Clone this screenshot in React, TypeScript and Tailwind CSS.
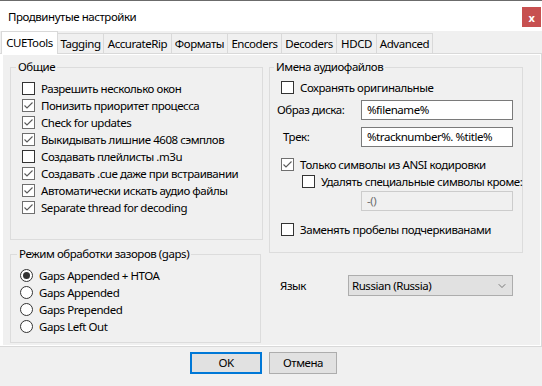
import { ChevronDown } from "lucide-react";

const tabs = [
  { label: "CUETools", w: "w-[57px]" },
  { label: "Tagging", w: "w-[46px]" },
  { label: "AccurateRip", w: "w-[68px]" },
  { label: "Форматы", w: "w-[56px]" },
  { label: "Encoders", w: "w-[54px]" },
  { label: "Decoders", w: "w-[55px]" },
  { label: "HDCD", w: "w-[40px]" },
  { label: "Advanced", w: "w-[56px]" },
];

const general = [
  { label: "Разрешить несколько окон", checked: false },
  { label: "Понизить приоритет процесса", checked: true },
  { label: "Check for updates", checked: true },
  { label: "Выкидывать лишние 4608 сэмплов", checked: true },
  { label: "Создавать плейлисты .m3u", checked: false },
  { label: "Создавать .cue даже при встраивании", checked: true },
  { label: "Автоматически искать аудио файлы", checked: true },
  { label: "Separate thread for decoding", checked: true },
];

const gaps = ["Gaps Appended + HTOA", "Gaps Appended", "Gaps Prepended", "Gaps Left Out"];

function Check({ checked }: { checked: boolean }) {
  return (
    <span
      className={`w-[13px] h-[13px] shrink-0 bg-white border flex items-center justify-center ${
        checked ? "border-[#6f6f6f]" : "border-[#333333]"
      }`}
    >
      {checked && (
        <svg width="11" height="11" viewBox="0 0 11 11">
          <path d="M1.5 5.5 L4 8 L9.5 2.5" fill="none" stroke="#5a5a5a" strokeWidth="1.1" />
        </svg>
      )}
    </span>
  );
}

function CheckRow({ label, checked, className = "" }: { label: string; checked: boolean; className?: string }) {
  return (
    <div className={`flex items-center gap-[6px] h-[17px] ${className}`}>
      <Check checked={checked} />
      <span className="whitespace-nowrap">{label}</span>
    </div>
  );
}

function Radio({ label, selected }: { label: string; selected: boolean }) {
  return (
    <div className="flex items-center gap-[6px] h-[17px]">
      <span className="w-[13px] h-[13px] rounded-full bg-white border border-[#333333] flex items-center justify-center">
        {selected && <span className="w-[7px] h-[7px] rounded-full bg-[#333333]" />}
      </span>
      <span className="whitespace-nowrap">{label}</span>
    </div>
  );
}

export default function App() {
  return (
    <div
      className="w-[542px] h-[386px] bg-[#f0f0f0] text-[11.5px] tracking-[-0.45px] leading-[16px] text-black flex flex-col overflow-hidden"
      style={{ fontFamily: '"Segoe UI", "Noto Sans", sans-serif' }}
    >
      {/* Title bar */}
      <div className="h-[31px] bg-white border-t border-[#6b6b6b] flex justify-between shrink-0">
        <span className="pl-[8px] pt-[8px]">Продвинутые настройки</span>
        <div className="mt-[6px] mr-[1px] w-[19px] h-[20px] bg-[#c75050] flex items-center justify-center text-white text-[11px] font-bold leading-none">
          x
        </div>
      </div>

      {/* Tabs */}
      <div className="h-[22px] flex items-end pl-[1px] shrink-0">
        {tabs.map((t, i) =>
          i === 0 ? (
            <div
              key={t.label}
              className={`${t.w} h-[23px] bg-white border border-b-0 border-[#d9d9d9] relative z-10 -mb-px flex items-center justify-center`}
            >
              {t.label}
            </div>
          ) : (
            <div
              key={t.label}
              className={`${t.w} h-[20px] bg-[#f0f0f0] border-t border-r border-[#d9d9d9] flex items-center justify-center`}
            >
              {t.label}
            </div>
          )
        )}
      </div>

      {/* Tab page */}
      <div className="w-[542px] h-[294px] bg-white border-t border-r border-b border-[#d9d9d9] pl-[3px] pr-[1px] pt-[1px] pb-px shrink-0">
        <div className="w-full h-full bg-[#f0f0f0] flex">
          {/* Left column */}
          <div className="flex flex-col pl-[7px] pt-[4px]">
            <fieldset className="w-[253px] h-[181px] border border-[#dcdcdc] pl-[11px] pt-[5px]">
              <legend className="-ml-[6px] px-[2px]">Общие</legend>
              {general.map((g) => (
                <CheckRow key={g.label} label={g.label} checked={g.checked} />
              ))}
            </fieldset>
            <fieldset className="mt-[6px] w-[251px] h-[97px] border border-[#dcdcdc] pl-[9px] pt-[5px]">
              <legend className="-ml-[3px] px-[2px]">Режим обработки зазоров (gaps)</legend>
              {gaps.map((g, i) => (
                <Radio key={g} label={g} selected={i === 0} />
              ))}
            </fieldset>
          </div>

          {/* Right column */}
          <div className="flex flex-col pl-[6px] pt-[4px]">
            <fieldset className="w-[251px] h-[194px] border border-[#dcdcdc] pl-[7px] pt-[4px]">
              <legend className="-ml-[3px] px-[2px]">Имена аудиофайлов</legend>
              <CheckRow label="Сохранять оригинальные" checked={false} className="ml-[4px]" />
              <div className="flex items-center mt-[4px] h-[20px]">
                <span className="w-[84px]">Образ диска:</span>
                <div className="w-[152px] h-[20px] bg-white border border-[#7a7a7a] pl-[5px] flex items-center">
                  %filename%
                </div>
              </div>
              <div className="flex items-center mt-[7px] h-[20px]">
                <span className="w-[84px] pl-[6px]">Трек:</span>
                <div className="w-[152px] h-[20px] bg-white border border-[#7a7a7a] pl-[5px] flex items-center">
                  %tracknumber%. %title%
                </div>
              </div>
              <CheckRow label="Только символы из ANSI кодировки" checked={true} className="ml-[4px] mt-[9px]" />
              <CheckRow label="Удалять специальные символы кроме:" checked={false} className="ml-[25px]" />
              <div className="ml-[84px] mt-px w-[152px] h-[20px] bg-[#f0f0f0] border border-[#cccccc] pl-[5px] flex items-center text-[#6d6d6d]">
                -()
              </div>
              <CheckRow label="Заменять пробелы подчеркиванами" checked={false} className="ml-[4px] mt-[10px]" />
            </fieldset>

            <div className="flex items-center mt-[22px] pl-[11px]">
              <span className="w-[68px]">Язык</span>
              <div className="w-[165px] h-[21px] bg-[#e1e1e1] border border-[#adadad] flex items-center justify-between pl-[3px] pr-[4px]">
                <span>Russian (Russia)</span>
                <ChevronDown size={12} strokeWidth={1.2} color="#333" />
              </div>
            </div>
          </div>
        </div>
      </div>

      {/* Buttons */}
      <div className="flex gap-[7px] pl-[190px] mt-[5px]">
        <div className="w-[72px] h-[22px] bg-[#e1e1e1] border-2 border-[#0078d7] flex items-center justify-center">
          OK
        </div>
        <div className="w-[68px] h-[22px] bg-[#e1e1e1] border border-[#adadad] flex items-center justify-center">
          Отмена
        </div>
      </div>
    </div>
  );
}
